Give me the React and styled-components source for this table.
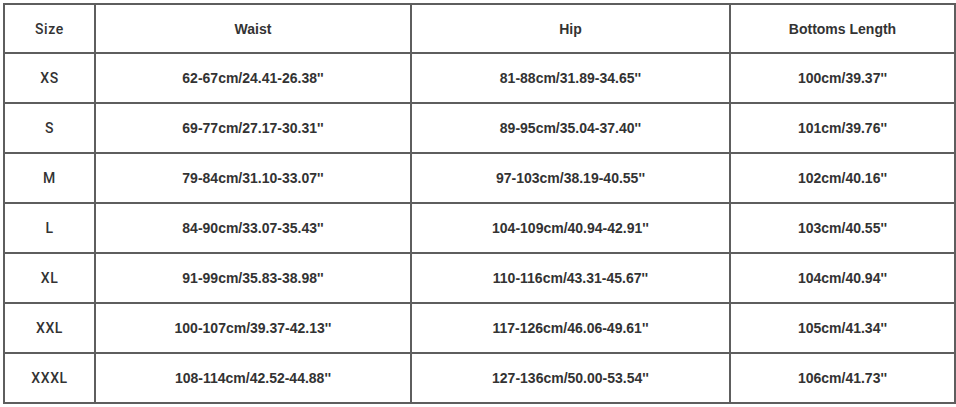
import React from "react";
import styled, { createGlobalStyle } from "styled-components";

const GlobalStyle = createGlobalStyle`
  body {
    margin: 0;
    background: #ffffff;
    font-family: "Liberation Sans", Arial, sans-serif;
  }
`;

const Page = styled.div`
  padding: 3px 0 0 3px;
`;

const Table = styled.table`
  border-collapse: collapse;
  table-layout: fixed;
  width: 951px;
  color: #333333;
`;

const Row = styled.tr`
  height: ${(p) => (p.head ? "49px" : "50px")};
`;

const Cell = styled.td`
  border: 2px solid #5e5e5e;
  text-align: center;
  vertical-align: middle;
  padding: 0;
  font-size: 14px;
  font-weight: 700;
  font-family: ${(p) =>
    p.first ? "Roboto, 'Liberation Sans', sans-serif" : "'Liberation Sans', Arial, sans-serif"};
  font-weight: ${(p) => (p.first ? 500 : 700)};
  letter-spacing: ${(p) => (p.first ? "0.6px" : "0")};
`;

const widths = [91, 316, 319, 225];

const header = ["Size", "Waist", "Hip", "Bottoms Length"];

const rows = [
  ["XS", "62-67cm/24.41-26.38''", "81-88cm/31.89-34.65''", "100cm/39.37''"],
  ["S", "69-77cm/27.17-30.31''", "89-95cm/35.04-37.40''", "101cm/39.76''"],
  ["M", "79-84cm/31.10-33.07''", "97-103cm/38.19-40.55''", "102cm/40.16''"],
  ["L", "84-90cm/33.07-35.43''", "104-109cm/40.94-42.91''", "103cm/40.55''"],
  ["XL", "91-99cm/35.83-38.98''", "110-116cm/43.31-45.67''", "104cm/40.94''"],
  ["XXL", "100-107cm/39.37-42.13''", "117-126cm/46.06-49.61''", "105cm/41.34''"],
  ["XXXL", "108-114cm/42.52-44.88''", "127-136cm/50.00-53.54''", "106cm/41.73''"],
];

export default function App() {
  return (
    <>
      <GlobalStyle />
      <Page>
        <Table>
          <colgroup>
            {widths.map((w, i) => (
              <col key={i} style={{ width: w }} />
            ))}
          </colgroup>
          <tbody>
            <Row head>
              {header.map((h, i) => (
                <Cell key={h} first={i === 0}>
                  {h}
                </Cell>
              ))}
            </Row>
            {rows.map((r) => (
              <Row key={r[0]}>
                {r.map((v, i) => (
                  <Cell key={i} first={i === 0}>
                    {v}
                  </Cell>
                ))}
              </Row>
            ))}
          </tbody>
        </Table>
      </Page>
    </>
  );
}
